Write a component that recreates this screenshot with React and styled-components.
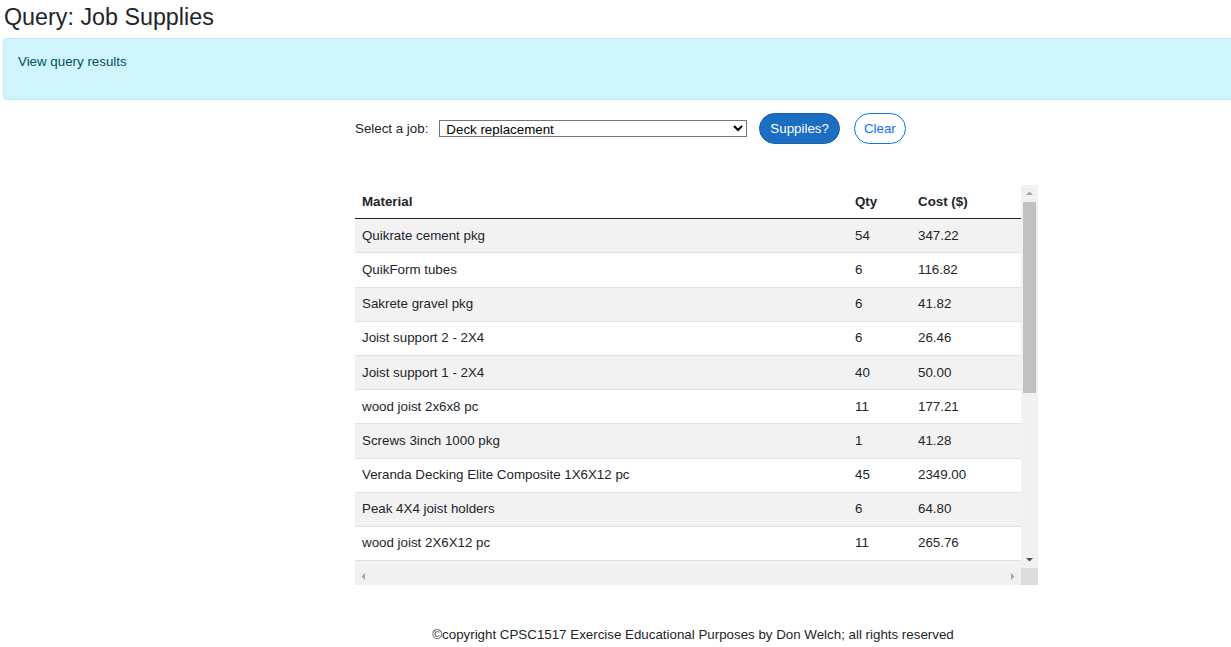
import React, { useState } from "react";
import styled, { createGlobalStyle } from "styled-components";

const GlobalStyle = createGlobalStyle`
  html, body {
    margin: 0;
    padding: 0;
    overflow: hidden;
    background: #fff;
  }
  body {
    font-family: "Liberation Sans", Arial, sans-serif;
    font-size: 13.33px;
    color: #212529;
  }
`

const Page = styled.div`
  width: 1387px;
  padding: 0 3px;
`

const Title = styled.h1`
  margin: 0;
  padding: 3px 0 0 1px;
  font-size: 23.3px;
  font-weight: 400;
  line-height: 28px;
  color: #212529;
`

const Alert = styled.div`
  margin-top: 7px;
  height: 60px;
  box-sizing: content-box;
  padding: 0 14px;
  border: 1px solid #b6effb;
  border-radius: 4px;
  background: #cff4fc;
  color: #055160;
  line-height: 46px;
`

const Column = styled.div`
  width: 683px;
  margin: 0 auto;
`

const FormRow = styled.div`
  display: flex;
  align-items: center;
  margin-top: 12px;
  height: 33px;
`

const Label = styled.label`
  margin-right: 11px;
`

const JobSelect = styled.select`
  width: 308px;
  height: 17px;
  padding: 0 0 0 2px;
  border: 1px solid #767676;
  border-radius: 0;
  background: #fff;
  font-family: "Liberation Sans", Arial, sans-serif;
  font-size: 13.33px;
  color: #000;
`

const PillButton = styled.button`
  height: 31px;
  padding: 0 10px;
  border-radius: 16px;
  font-family: "Liberation Sans", Arial, sans-serif;
  font-size: 13.33px;
  cursor: pointer;
  ${({ $outline }) => $outline ? `
    margin-left: 14px;
    padding: 0 9px;
    border: 1px solid #0d6efd;
    background: #fff;
    color: #0d6efd;
  ` : `
    margin-left: 12px;
    border: 1px solid #1861ac;
    background: #1b6ec2;
    color: #fff;
  `}
`

/* scroll frame: content + hand-drawn classic scrollbars */
const ScrollFrame = styled.div`
  margin-top: 40px;
  display: grid;
  grid-template-columns: 666px 17px;
  grid-template-rows: 383px 17px;
`

const ScrollContent = styled.div`
  overflow: auto;
  scrollbar-width: none;
  &::-webkit-scrollbar {
    display: none;
  }
`

const VBar = styled.div`
  display: flex;
  flex-direction: column;
  background: #f1f1f1;
`

const HBar = styled.div`
  display: flex;
  background: #f1f1f1;
`

const ArrowButton = styled.div`
  flex: 0 0 17px;
  height: 17px;
  display: flex;
  align-items: center;
  justify-content: center;
`

const Track = styled.div`
  flex: 1;
  display: flex;
  flex-direction: ${({ $vertical }) => ($vertical ? "column" : "row")};
`

const Thumb = styled.div`
  margin: 0 2px;
  background: #c1c1c1;
`

const Corner = styled.div`
  background: #dcdcdc;
`

const Arrow = ({ dir, color }) => {
  const points = {
    up: "1,5 8,5 4.5,1.5",
    down: "1,2 8,2 4.5,5.5",
    left: "5,1 5,8 1.5,4.5",
    right: "2,1 2,8 5.5,4.5",
  }[dir]
  const vertical = dir === "up" || dir === "down"
  return (
    <svg width={vertical ? 9 : 7} height={vertical ? 7 : 9} viewBox={vertical ? "0 0 9 7" : "0 0 7 9"}>
      <polygon points={points} fill={color} />
    </svg>
  )
}

const Table = styled.table`
  width: 666px;
  border-collapse: collapse;
  table-layout: fixed;
`

const Th = styled.th`
  padding: 6.6px 7px;
  text-align: left;
  font-weight: 700;
  line-height: 20px;
  border-bottom: 1px solid #212529;
  width: ${({ $w }) => $w - 14}px;
`

const Tr = styled.tr`
  background: ${({ $odd }) => ($odd ? "#f2f2f2" : "#fff")};
`

const Td = styled.td`
  padding: 6.6px 7px;
  line-height: 20px;
  border-bottom: 1px solid #dee2e6;
  white-space: nowrap;
`

const Footer = styled.footer`
  margin-top: 40px;
  padding-right: 7px;
  text-align: center;
  line-height: 20px;
`

const supplies = [
  ["Quikrate cement pkg", 54, "347.22"],
  ["QuikForm tubes", 6, "116.82"],
  ["Sakrete gravel pkg", 6, "41.82"],
  ["Joist support 2 - 2X4", 6, "26.46"],
  ["Joist support 1 - 2X4", 40, "50.00"],
  ["wood joist 2x6x8 pc", 11, "177.21"],
  ["Screws 3inch 1000 pkg", 1, "41.28"],
  ["Veranda Decking Elite Composite 1X6X12 pc", 45, "2349.00"],
  ["Peak 4X4 joist holders", 6, "64.80"],
  ["wood joist 2X6X12 pc", 11, "265.76"],
  ["Post 4X4X8 pc", 6, "89.70"],
  ["Railing kit 6ft", 8, "472.00"],
  ["Stair stringer 3 step", 3, "38.85"],
  ["Deck screws 2.5inch pkg", 2, "55.96"],
  ["Joist hanger 2X6", 22, "30.58"],
  ["Flashing tape roll", 2, "39.98"],
  ["Post cap 4X4", 6, "41.94"],
  ["Fascia board 1X8X12 pc", 4, "187.96"],
  ["Lag bolts 1/2 x 4 pkg", 2, "24.50"],
]

const App = () => {
  const [job, setJob] = useState("deck")

  return (
    <Page>
      <GlobalStyle />
      <Title>Query: Job Supplies</Title>
      <Alert>View query results</Alert>
      <Column>
        <FormRow>
          <Label htmlFor="job">Select a job:</Label>
          <JobSelect id="job" value={job} onChange={(e) => setJob(e.target.value)}>
            <option value="deck">Deck replacement</option>
            <option value="fence">Fence repair</option>
            <option value="patio">Patio install</option>
          </JobSelect>
          <PillButton>Suppiles?</PillButton>
          <PillButton $outline>Clear</PillButton>
        </FormRow>
        <ScrollFrame>
          <ScrollContent>
            <Table>
              <thead>
                <tr>
                  <Th $w={493}>Material</Th>
                  <Th $w={63}>Qty</Th>
                  <Th $w={110}>Cost ($)</Th>
                </tr>
              </thead>
              <tbody>
                {supplies.map(([name, qty, cost], i) => (
                  <Tr key={name} $odd={i % 2 === 0}>
                    <Td>{name}</Td>
                    <Td>{qty}</Td>
                    <Td>{cost}</Td>
                  </Tr>
                ))}
              </tbody>
            </Table>
          </ScrollContent>
          <VBar>
            <ArrowButton><Arrow dir="up" color="#a3a3a3" /></ArrowButton>
            <Track $vertical>
              <Thumb style={{ height: 191 }} />
            </Track>
            <ArrowButton><Arrow dir="down" color="#505050" /></ArrowButton>
          </VBar>
          <HBar>
            <ArrowButton><Arrow dir="left" color="#a3a3a3" /></ArrowButton>
            <Track />
            <ArrowButton><Arrow dir="right" color="#a3a3a3" /></ArrowButton>
          </HBar>
          <Corner />
        </ScrollFrame>
      </Column>
      <Footer>&copy;copyright CPSC1517 Exercise Educational Purposes by Don Welch; all rights reserved</Footer>
    </Page>
  )
}

export default App
